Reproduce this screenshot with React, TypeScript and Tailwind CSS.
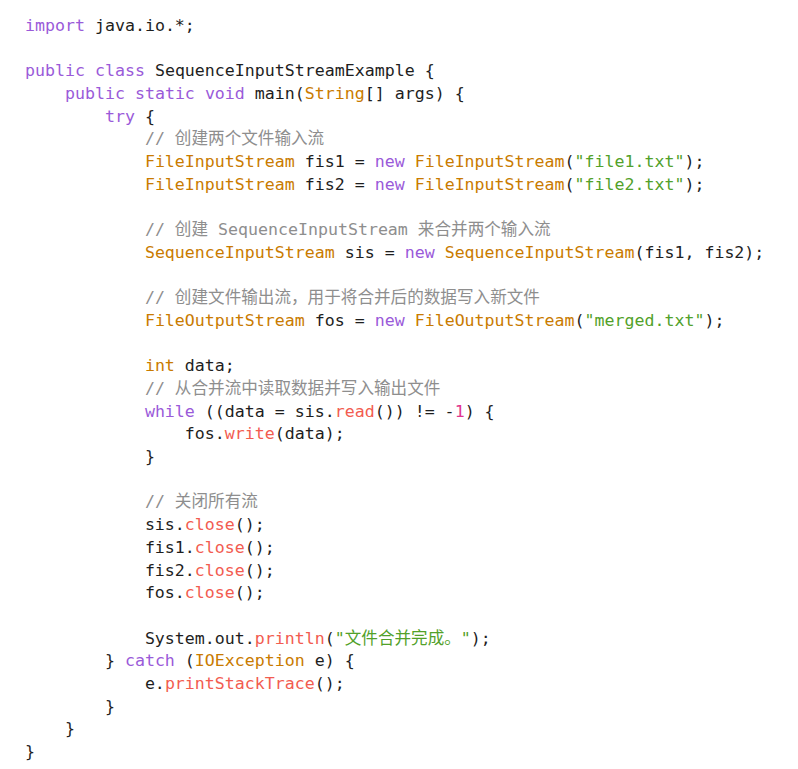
type Tok = [string, string];

const K = "text-[#9a5ad9]"; // keyword
const T = "text-[#c97b00]"; // type
const S = "text-[#52a12a]"; // string
const M = "text-[#f25c50]"; // method
const C = "text-[#8e8e8e]"; // comment
const N = "text-[#e0358f]"; // number
const P = ""; // plain

const lines: Tok[][] = [
  [[K, "import"], [P, " java.io.*;"]],
  [],
  [[K, "public"], [P, " "], [K, "class"], [P, " SequenceInputStreamExample {"]],
  [[P, "    "], [K, "public"], [P, " "], [K, "static"], [P, " "], [K, "void"], [P, " main("], [T, "String"], [P, "[] args) {"]],
  [[P, "        "], [K, "try"], [P, " {"]],
  [[P, "            "], [C, "// 创建两个文件输入流"]],
  [[P, "            "], [T, "FileInputStream"], [P, " fis1 = "], [K, "new"], [P, " "], [T, "FileInputStream"], [P, "("], [S, "\"file1.txt\""], [P, ");"]],
  [[P, "            "], [T, "FileInputStream"], [P, " fis2 = "], [K, "new"], [P, " "], [T, "FileInputStream"], [P, "("], [S, "\"file2.txt\""], [P, ");"]],
  [],
  [[P, "            "], [C, "// 创建 SequenceInputStream 来合并两个输入流"]],
  [[P, "            "], [T, "SequenceInputStream"], [P, " sis = "], [K, "new"], [P, " "], [T, "SequenceInputStream"], [P, "(fis1, fis2);"]],
  [],
  [[P, "            "], [C, "// 创建文件输出流，用于将合并后的数据写入新文件"]],
  [[P, "            "], [T, "FileOutputStream"], [P, " fos = "], [K, "new"], [P, " "], [T, "FileOutputStream"], [P, "("], [S, "\"merged.txt\""], [P, ");"]],
  [],
  [[P, "            "], [T, "int"], [P, " data;"]],
  [[P, "            "], [C, "// 从合并流中读取数据并写入输出文件"]],
  [[P, "            "], [K, "while"], [P, " ((data = sis."], [M, "read"], [P, "()) != -"], [N, "1"], [P, ") {"]],
  [[P, "                fos."], [M, "write"], [P, "(data);"]],
  [[P, "            }"]],
  [],
  [[P, "            "], [C, "// 关闭所有流"]],
  [[P, "            sis."], [M, "close"], [P, "();"]],
  [[P, "            fis1."], [M, "close"], [P, "();"]],
  [[P, "            fis2."], [M, "close"], [P, "();"]],
  [[P, "            fos."], [M, "close"], [P, "();"]],
  [],
  [[P, "            System.out."], [M, "println"], [P, "("], [S, "\"文件合并完成。\""], [P, ");"]],
  [[P, "        } "], [K, "catch"], [P, " ("], [T, "IOException"], [P, " e) {"]],
  [[P, "            e."], [M, "printStackTrace"], [P, "();"]],
  [[P, "        }"]],
  [[P, "    }"]],
  [[P, "}"]],
];

export default function App() {
  return (
    <div className="min-h-screen bg-white pl-[25px] pt-[15px]">
      <pre className="font-['DejaVu_Sans_Mono','Noto_Sans_CJK_SC',monospace] text-[16.6px] leading-[22.69px] text-[#1e1e1e]">
        {lines.map((line, i) => (
          <div key={i} className="h-[22.69px] whitespace-pre">
            {line.map(([cls, text], j) => (
              <span key={j} className={cls}>
                {text}
              </span>
            ))}
          </div>
        ))}
      </pre>
    </div>
  );
}
